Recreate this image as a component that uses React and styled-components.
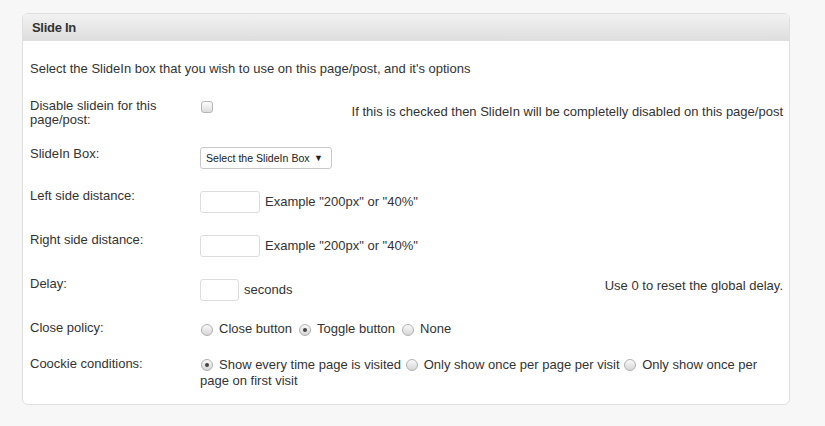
import React from "react";
import styled, { createGlobalStyle } from "styled-components";

const GlobalStyle = createGlobalStyle`
  html, body {
    margin: 0;
    padding: 0;
    background: #f7f7f7;
  }
  body {
    font-family: "Liberation Sans", Arial, sans-serif;
    font-size: 13px;
    color: #333;
  }
`;

const Page = styled.div`
  padding: 13px 35px 0 22px;
`;

const Panel = styled.div`
  background: #fff;
  border: 1px solid #dfdfdf;
  border-radius: 6px;
  overflow: hidden;
`;

const PanelHeader = styled.div`
  height: 26px;
  display: flex;
  align-items: center;
  padding: 0 9px;
  background: linear-gradient(to bottom, #f2f2f2, #dedede);
  border-bottom: 1px solid #dfdfdf;
  font-weight: bold;
  font-size: 13px;
  color: #333;
  letter-spacing: -0.3px;
`;

const PanelBody = styled.div`
  padding: 20px 6px 15px 7px;
`;

const Intro = styled.p`
  margin: 0 0 23px;
  line-height: 15px;
`;

const Form = styled.div`
  display: flex;
  flex-direction: column;
  gap: 20px;
`;

const Row = styled.div`
  display: grid;
  grid-template-columns: 150px 1fr auto;
  column-gap: 20px;
  align-items: start;
`;

const Label = styled.div`
  line-height: 14px;
  padding-top: ${(p) => p.$offset || 0}px;
`;

const Control = styled.div`
  display: flex;
  align-items: center;
  flex-wrap: wrap;
  gap: 5px;
  line-height: 16px;
  padding-top: ${(p) => p.$offset || 0}px;
`;

const Note = styled.div`
  text-align: right;
  line-height: 15px;
  padding-top: ${(p) => p.$offset || 0}px;
`;

const Checkbox = styled.span`
  display: inline-block;
  width: 10px;
  height: 10px;
  margin-left: 1px;
  border: 1px solid #b5b5b5;
  border-radius: 3px;
  background: linear-gradient(to bottom, #fdfdfd, #dcdcdc);
`;

const Select = styled.div`
  display: inline-flex;
  align-items: center;
  justify-content: space-between;
  width: 132px;
  height: 22px;
  box-sizing: border-box;
  padding: 0 8px 0 5px;
  border: 1px solid #c9c9c9;
  border-radius: 3px;
  background: #fff;
  font-size: 10.6px;
  color: #222;
  span {
    font-size: 9px;
  }
`;

const TextInput = styled.div`
  width: ${(p) => p.$w}px;
  height: 22px;
  box-sizing: border-box;
  border: 1px solid #dcdcdc;
  border-radius: 3px;
  background: #fff;
`;

const Radio = styled.span`
  display: inline-block;
  position: relative;
  box-sizing: border-box;
  width: 12px;
  height: 12px;
  margin: 2px 0 0 1px;
  border: 1px solid #b0b0b0;
  border-radius: 50%;
  background: linear-gradient(to bottom, #f9f9f9, #d6d6d6);
  ${(p) =>
    p.$checked &&
    `
    &::after {
      content: "";
      position: absolute;
      left: 3px;
      top: 3px;
      width: 4px;
      height: 4px;
      border-radius: 50%;
      background: #444;
    }
  `}
`;

const Choice = styled.span`
  display: inline-flex;
  align-items: center;
  gap: 6px;
  margin-right: 1px;
`;

const Wrapped = styled.div`
  line-height: 16px;
  grid-column: 2 / 4;
  ${Radio} {
    vertical-align: -2px;
    margin: 0 6px 0 1px;
  }
`;

export default function App() {
  return (
    <>
      <GlobalStyle />
      <Page>
        <Panel>
          <PanelHeader>Slide In</PanelHeader>
          <PanelBody>
            <Intro>
              Select the SlideIn box that you wish to use on this page/post, and
              it's options
            </Intro>
            <Form>
              <Row>
                <Label>Disable slidein for this page/post:</Label>
                <Control $offset={2}>
                  <Checkbox />
                </Control>
                <Note $offset={5}>
                  If this is checked then SlideIn will be completelly disabled on
                  this page/post
                </Note>
              </Row>
              <Row>
                <Label>SlideIn Box:</Label>
                <Control>
                  <Select>
                    Select the SlideIn Box <span>▼</span>
                  </Select>
                </Control>
              </Row>
              <Row>
                <Label>Left side distance:</Label>
                <Control $offset={2}>
                  <TextInput $w={60} />
                  Example "200px" or "40%"
                </Control>
              </Row>
              <Row>
                <Label>Right side distance:</Label>
                <Control $offset={2}>
                  <TextInput $w={60} />
                  Example "200px" or "40%"
                </Control>
              </Row>
              <Row>
                <Label>Delay:</Label>
                <Control $offset={2}>
                  <TextInput $w={39} />
                  seconds
                </Control>
                <Note $offset={1}>Use 0 to reset the global delay.</Note>
              </Row>
              <Row>
                <Label>Close policy:</Label>
                <Control>
                  <Choice>
                    <Radio />
                    Close button
                  </Choice>
                  <Choice>
                    <Radio $checked />
                    Toggle button
                  </Choice>
                  <Choice>
                    <Radio />
                    None
                  </Choice>
                </Control>
              </Row>
              <Row>
                <Label>Coockie conditions:</Label>
                <Wrapped>
                  <Radio $checked />
                  Show every time page is visited <Radio />
                  Only show once per page per visit <Radio />
                  Only show once per page on first visit
                </Wrapped>
              </Row>
            </Form>
          </PanelBody>
        </Panel>
      </Page>
    </>
  );
}
